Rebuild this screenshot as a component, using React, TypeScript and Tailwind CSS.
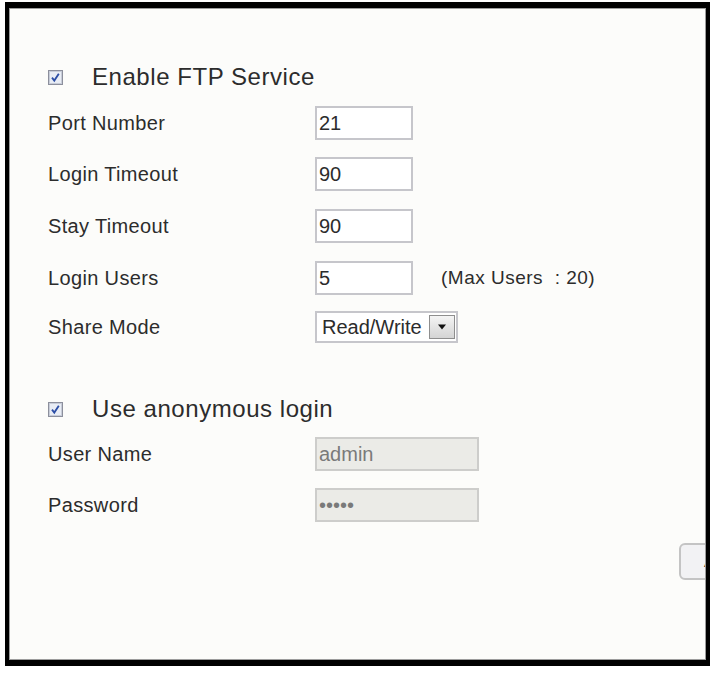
import React from "react";

type FieldRowProps = {
    label: string;
    children: React.ReactNode;
    className?: string;
};

function CheckMark() {
    return (
        <svg width="15" height="15" viewBox="0 0 15 15" className="shrink-0">
            <rect x="0.5" y="0.5" width="14" height="14" fill="#dfe3ec" stroke="#8c8f9c" />
            <rect x="1.5" y="1.5" width="12" height="12" fill="#e9edf5" stroke="#c7ccd8" />
            <path d="M4 7.6 L6.3 10.6 L10.8 3.8" fill="none" stroke="#2c4ea6" strokeWidth="1.8" />
        </svg>
    );
}

function CheckHeading({ label, className }: { label: string; className?: string }) {
    return (
        <div className={"flex h-[30px] items-center " + (className ?? "")}>
            <CheckMark />
            <span className="ml-[29px] text-[24px] tracking-[0.55px] text-[#2c2c2c]">{label}</span>
        </div>
    );
}

function FieldRow({ label, children, className }: FieldRowProps) {
    return (
        <div className={"flex items-center " + (className ?? "")}>
            <span className="w-[267px] shrink-0 text-[20px] tracking-[0.35px] text-[#2c2c2c]">{label}</span>
            {children}
        </div>
    );
}

function TextBox({ value }: { value: string }) {
    return (
        <input
            readOnly
            defaultValue={value}
            className="h-[34px] w-[98px] border-2 border-[#c6c6cb] bg-white pl-[2px] text-[20px] text-[#2c2c2c] outline-none"
        />
    );
}

function GreyBox({ value, password }: { value: string; password?: boolean }) {
    return (
        <input
            readOnly
            type={password ? "password" : "text"}
            defaultValue={value}
            className="h-[34px] w-[164px] border-2 border-[#cdcdcb] bg-[#ebebe7] pl-[2px] text-[20px] text-[#7a7a7a] outline-none"
        />
    );
}

export default function App() {
    return (
        <div className="h-[673px] w-[716px] bg-white pt-[2px] pl-[5px] font-['Liberation_Sans',Arial,sans-serif]">
            <div className="h-[664px] w-[705px] border-x-4 border-y-[6px] border-black bg-[#fcfcfa]">
                <div className="h-full overflow-hidden border border-[#9c9c9c] pl-[38px]">
                    <CheckHeading label="Enable FTP Service" className="mt-[53px]" />

                    <FieldRow label="Port Number" className="mt-[14px]">
                        <TextBox value="21" />
                    </FieldRow>
                    <FieldRow label="Login Timeout" className="mt-[17px]">
                        <TextBox value="90" />
                    </FieldRow>
                    <FieldRow label="Stay Timeout" className="mt-[18px]">
                        <TextBox value="90" />
                    </FieldRow>
                    <FieldRow label="Login Users" className="mt-[18px]">
                        <TextBox value="5" />
                        <span className="ml-[28px] text-[19px] tracking-[0.5px] text-[#2c2c2c]">(Max Users&nbsp; :&nbsp;20)</span>
                    </FieldRow>
                    <FieldRow label="Share Mode" className="mt-[16px]">
                        <div className="flex h-[32px] w-[143px] items-center border-2 border-[#c6c6cb] bg-white">
                            <span className="ml-[5px] flex-1 text-[20px] text-[#2c2c2c]">Read/Write</span>
                            <div className="mr-[1px] flex h-[24px] w-[26px] items-center justify-center border border-[#8e8e8e] bg-gradient-to-b from-[#f4f4f4] to-[#d4d4d4]">
                                <svg width="10" height="6" viewBox="0 0 10 6">
                                    <path d="M1 0.5 H9 L5 5.5 Z" fill="#111" />
                                </svg>
                            </div>
                        </div>
                    </FieldRow>

                    <CheckHeading label="Use anonymous login" className="mt-[51px]" />

                    <FieldRow label="User Name" className="mt-[13px]">
                        <GreyBox value="admin" />
                    </FieldRow>
                    <FieldRow label="Password" className="mt-[17px]">
                        <GreyBox value="admin" password />
                    </FieldRow>

                    <div className="mt-[21px] flex">
                        <button className="ml-[631px] h-[37px] shrink-0 rounded-[6px] border-2 border-[#c4c4c4] bg-[#f2f2f4] px-[23px] text-[19px] text-[#2c2c2c]">
                            Apply
                        </button>
                    </div>
                </div>
            </div>
        </div>
    );
}
